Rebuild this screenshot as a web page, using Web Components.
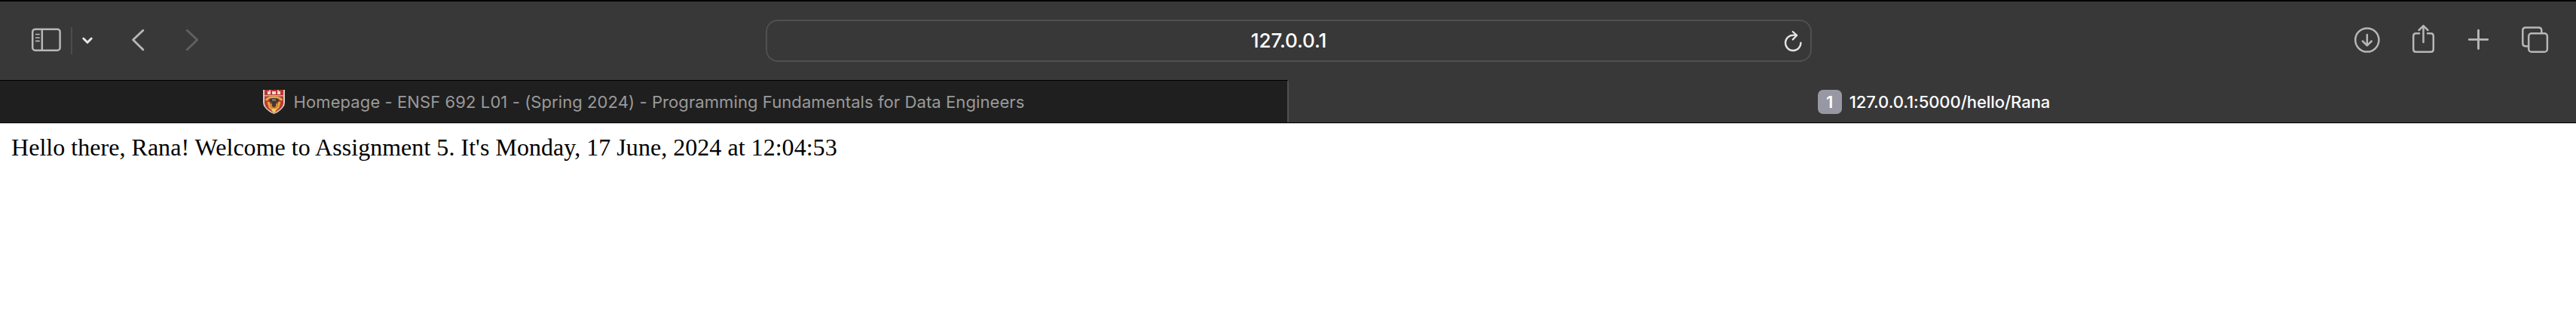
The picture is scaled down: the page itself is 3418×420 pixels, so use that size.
<!DOCTYPE html>
<html lang="en">
<head>
<meta charset="utf-8">
<title>127.0.0.1:5000/hello/Rana</title>
<style>
html, body { margin: 0; height: 100%; background: #fff; }
body { font-family: Inter, "Liberation Sans", sans-serif; overflow: hidden; }
</style>
</head>
<body>
<browser-window>
  <browser-toolbar slot="toolbar"><address-field>127.0.0.1</address-field></browser-toolbar>
  <browser-tab slot="tabs"><crest-icon slot="icon"></crest-icon>Homepage - ENSF 692 L01 - (Spring 2024) - Programming Fundamentals for Data Engineers</browser-tab>
  <browser-tab slot="tabs" active><tab-badge slot="icon">1</tab-badge>127.0.0.1:5000/hello/Rana</browser-tab>
  <page-content>Hello there, Rana! Welcome to Assignment 5. It's Monday, 17 June, 2024 at 12:04:53</page-content>
</browser-window>
<script>
const define = (name, html) => customElements.define(name, class extends HTMLElement {
  constructor() {
    super();
    this.attachShadow({ mode: 'open' }).innerHTML = html;
  }
});

define('browser-window', `
<style>
:host { display: flex; flex-direction: column; height: 420px; }
.tabs { display: flex; height: 56px; border-bottom: 1px solid #000; background: #383838; }
.edge { height: 1px; background: #bdbdbd; }
</style>
<slot name="toolbar"></slot>
<div class="tabs"><slot name="tabs"></slot></div>
<div class="edge"></div>
<slot></slot>`);

define('browser-toolbar', `
<style>
:host { display: flex; align-items: center; box-sizing: border-box; height: 106px; border-top: 2px solid #000; background: #383838; }
.left { display: flex; align-items: center; width: 1016px; box-sizing: border-box; padding-left: 40px; flex: none; }
.sep { width: 2px; height: 36px; background: #4c4c4c; margin: 0 12px 0 10px; }
.right { flex: 1; display: flex; justify-content: flex-end; gap: 38px; padding-right: 35px; }
svg { display: block; height: 44px; flex: none; fill: none; stroke: #b7b7b7; stroke-width: 2.5; stroke-linecap: round; stroke-linejoin: round; }
</style>
<div class="left">
  <svg width="44" viewBox="40 32 44 44"><rect x="43.2" y="38.7" width="36.4" height="28" rx="3.5"/><path d="M55.8 39v27.500"/><path stroke-width="1.7" d="M47.7 45.500h4.4M47.7 50h4.4M47.7 54.4h4.4"/></svg>
  <div class="sep"></div>
  <svg width="16" viewBox="108 32 16 44"><path stroke="#e6e6e6" stroke-width="3" d="M110.8 51l5.2 5.3 5.2-5.3"/></svg>
  <svg width="20" viewBox="174 32 20 44" style="margin-left:50px"><path stroke-width="2.9" d="M189.8 40.3l-13.2 12.4 13.2 13"/></svg>
  <svg width="20" viewBox="245 32 20 44" style="margin-left:51px"><path stroke="#606060" stroke-width="2.9" d="M248.3 40.3l13.4 12.4-13.4 13"/></svg>
</div>
<slot></slot>
<div class="right">
  <svg width="36" viewBox="3122 32 36 44"><circle cx="3139.8" cy="53" r="15.6"/><path d="M3139.8 46v14M3133.9 54.5l5.9 5.8 5.9-5.8"/></svg>
  <svg width="36" viewBox="3196 32 36 44"><path d="M3209 44.2h-4.2q-3.6 0-3.6 3.6v17.4q0 3.6 3.6 3.6h19.4q3.6 0 3.6-3.6V47.8q0-3.6-3.6-3.6h-4.2M3214.5 56V34.4M3208.6 40l5.9-5.9 5.9 5.9"/></svg>
  <svg width="36" viewBox="3270 32 36 44"><path stroke-width="2.9" d="M3275.3 52.4h24.4M3287.5 40.2v24.4"/></svg>
  <svg width="38" viewBox="3345 32 38 44"><rect x="3355.2" y="44.2" width="24.7" height="24.6" rx="3.8"/><path d="M3355 61.2h-3.7q-4 0-4-4V40.6q0-4 4-4h17q4 0 4 4v3.4"/></svg>
</div>`);

define('address-field', `
<style>
:host { display: grid; grid-template-columns: 1fr auto 1fr; align-items: center; box-sizing: border-box; width: 1388px; height: 56px; flex: none; border: 2px solid #505050; border-radius: 16px; color: #fff; font-size: 26px; font-weight: 500; line-height: 32px; white-space: nowrap; }
.text { grid-column: 2; letter-spacing: -0.1px; }
svg { justify-self: end; margin-right: 9px; display: block; fill: none; stroke: #e4e4e4; stroke-width: 2.3; stroke-linecap: round; stroke-linejoin: round; }
</style>
<span class="text"><slot></slot></span>
<svg width="28" height="32" viewBox="2365 38 28 32"><path d="M2389.4 56.6a10.2 10.2 0 1 1-10.2-10h4.8M2378.8 42l5.4 4.8-5.4 5.6"/></svg>`);

define('browser-tab', `
<style>
:host { display: flex; align-items: center; justify-content: center; box-sizing: border-box; width: 1710px; height: 56px; border-top: 1px solid #000; border-right: 2px solid #505050; background: #1f1f1f; color: #9a9a9a; font-size: 22px; line-height: 28px; white-space: nowrap; gap: 12px; }
:host([active]) { width: 1708px; border-color: transparent; border-right: 0; background: #383838; color: #fff; font-weight: 500; gap: 10px; padding-left: 4px; }
.text { letter-spacing: 0.09px; }
:host([active]) .text { letter-spacing: -0.05px; }
</style>
<slot name="icon"></slot><span class="text"><slot></slot></span>`);

define('tab-badge', `
<style>
:host { display: grid; place-items: center; width: 32px; height: 32px; border-radius: 7px; background: #9897a4; color: #fff; font-size: 22px; font-weight: 600; line-height: 28px; }
</style>
<slot></slot>`);

define('crest-icon', `
<style>
:host { display: block; width: 29px; height: 32px; }
svg { display: block; }
</style>
<svg width="29" height="32" viewBox="0 0 29 32">
  <path fill="#d5cec2" d="M0 0h29v17q0 4-3 7-4 5-11.500 8Q7 29 3 24 0 21 0 17z"/>
  <path fill="#bd3636" d="M2 0h25v17q0 5-5 9l-7.500 5L7 26q-5-4-5-9z"/>
  <path fill="#eadccb" d="M6 2h4v4H6zM12 2h5v4h-5zM19 2h4v4h-4z"/>
  <path fill="#dda79b" d="M8 0h2v2H8zM19 0h2v2h-2zM2 7h25v1.500H2z"/>
  <path fill="none" stroke="#e0ab3d" stroke-width="3" d="M4 14q2-4 10.500-4T25 14M7 16l2 7 5.500 5 5.500-5 2-7"/>
  <path fill="#3f3933" d="M8 12l4-1h5l4 1-1 4-3 1v4l-2.500 2-2.500-2v-4l-3-1z"/>
  <path fill="#77716a" d="M12 12h5v3h-5z"/>
  <path fill="#c98a35" d="M9 18l3 1v3l2.500 2 2.500-2v-3l3-1v4l-5.500 5L9 22z"/>
  <path fill="#f0cf63" d="M12 25h5v3l-2.500 3-2.500-3z"/>
</svg>`);

define('page-content', `
<style>
:host { display: block; flex: 1; padding: 13px 15px; background: #fff; color: #000; font-family: "Liberation Serif", serif; font-size: 32px; line-height: 36px; letter-spacing: 0.035px; white-space: nowrap; }
</style>
<slot></slot>`);
</script>
</body>
</html>
